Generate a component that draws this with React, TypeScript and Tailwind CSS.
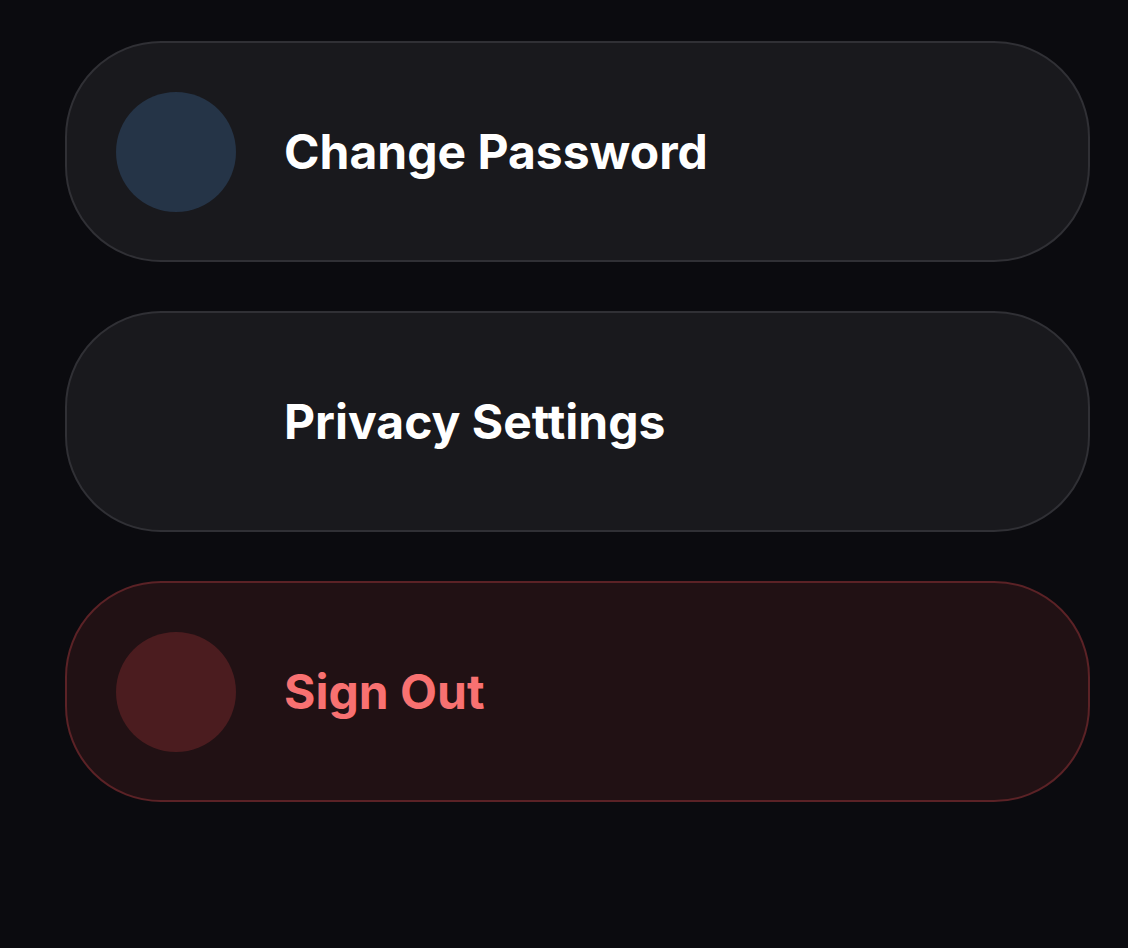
const items = [
  {
    label: "Change Password",
    card: "bg-[#19191d] border-[#303035]",
    dot: "bg-[#253447]",
    text: "text-white",
  },
  {
    label: "Privacy Settings",
    card: "bg-[#19191d] border-[#303035]",
    dot: "bg-transparent",
    text: "text-white",
  },
  {
    label: "Sign Out",
    card: "bg-[#211114] border-[#5b2226]",
    dot: "bg-[#4b1c1f]",
    text: "text-[#f87171]",
  },
];

export default function App() {
  return (
    <div
      className="min-h-screen w-full bg-[#0b0b0f] pt-[41px] pl-[65px]"
      style={{ fontFamily: "Inter, 'Noto Sans', sans-serif" }}
    >
      <div className="flex w-[1025px] flex-col gap-[49px]">
        {items.map((item) => (
          <div
            key={item.label}
            className={`flex h-[221px] items-center gap-[48px] rounded-[96px] border-2 pl-[49px] ${item.card}`}
          >
            <div className={`h-[120px] w-[120px] shrink-0 rounded-full ${item.dot}`} />
            <span className={`text-[48px] font-bold leading-none ${item.text}`}>
              {item.label}
            </span>
          </div>
        ))}
      </div>
    </div>
  );
}
